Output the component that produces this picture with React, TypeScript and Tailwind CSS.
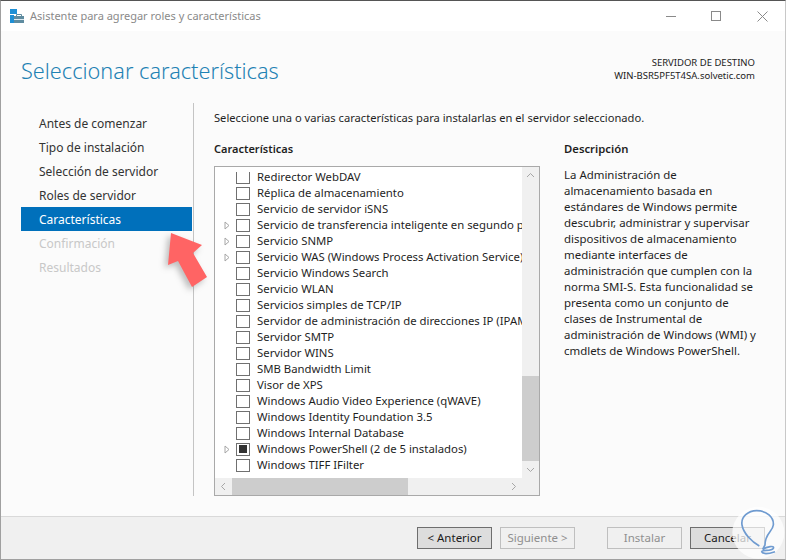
const rows = [
  { label: "Redirector WebDAV" },
  { label: "Réplica de almacenamiento" },
  { label: "Servicio de servidor iSNS" },
  { label: "Servicio de transferencia inteligente en segundo plano (BITS)", expand: true },
  { label: "Servicio SNMP", expand: true },
  { label: "Servicio WAS (Windows Process Activation Service)", expand: true },
  { label: "Servicio Windows Search" },
  { label: "Servicio WLAN" },
  { label: "Servicios simples de TCP/IP" },
  { label: "Servidor de administración de direcciones IP (IPAM)" },
  { label: "Servidor SMTP" },
  { label: "Servidor WINS" },
  { label: "SMB Bandwidth Limit" },
  { label: "Visor de XPS" },
  { label: "Windows Audio Video Experience (qWAVE)" },
  { label: "Windows Identity Foundation 3.5" },
  { label: "Windows Internal Database" },
  { label: "Windows PowerShell (2 de 5 instalados)", expand: true, partial: true },
  { label: "Windows TIFF IFilter" },
];

const steps = [
  { label: "Antes de comenzar" },
  { label: "Tipo de instalación" },
  { label: "Selección de servidor" },
  { label: "Roles de servidor" },
  { label: "Características", active: true },
  { label: "Confirmación", disabled: true },
  { label: "Resultados", disabled: true },
];

function Chevron({ d }: { d: string }) {
  return (
    <svg width="9" height="9" viewBox="0 0 9 9" fill="none" stroke="#a6a6a6" strokeWidth="1">
      <path d={d} />
    </svg>
  );
}

function WizardButton({ label, off, className }: { label: string; off?: boolean; className?: string }) {
  const look = off ? "border-[#bfbfbf] bg-[#f0f0f0] text-[#8f8f8f]" : "border-[#6e6e6e] bg-[#dddddd] text-[#1a1a1a]";
  return (
    <div className={`flex h-[22px] w-[75px] items-center justify-center border text-[11.5px] ${look} ${className ?? ""}`}>
      {label}
    </div>
  );
}

export default function App() {
  return (
    <div className="relative flex h-[560px] w-[786px] flex-col overflow-hidden border-t border-r border-b border-l border-t-[#555555] border-r-[#c8c8c8] border-b-[#a0a0a0] border-l-[#a0a0a0] bg-[#fbfbfb] font-['Noto_Sans',sans-serif] text-[12px] text-[#1f1f1f]">
      {/* title bar */}
      <div className="flex h-[30px] shrink-0 items-center bg-white pl-[9px]">
        <svg width="15" height="15" viewBox="0 0 15 15">
          <rect x="0" y="0" width="7" height="5" fill="#1e8fd5" />
          <rect x="0" y="6" width="4" height="8" fill="#1e8fd5" />
          <rect x="4" y="7" width="10" height="7" fill="#5f8ca0" />
          <rect x="4" y="10" width="10" height="1" fill="#dce8f0" />
          <path d="M6.5 7 V5.5 H11.5 V7" fill="none" stroke="#5f8ca0" />
        </svg>
        <span className="ml-[5px] text-[11px] text-[#8a8a8a]">Asistente para agregar roles y características</span>
        <div className="ml-auto flex items-center pr-[17px]">
          <div className="h-px w-[10px] bg-[#8a8a8a]" />
          <div className="ml-[35px] h-[10px] w-[10px] border border-[#8a8a8a]" />
          <svg className="ml-[36px]" width="11" height="11" viewBox="0 0 11 11" stroke="#8a8a8a" strokeWidth="1">
            <path d="M0.5 0.5 L10.5 10.5 M10.5 0.5 L0.5 10.5" />
          </svg>
        </div>
      </div>

      {/* header */}
      <div className="flex h-[72px] shrink-0 items-start justify-between pl-[20px] pr-[30px]">
        <h1 className="mt-[22px] text-[21.7px] font-light leading-[36px] text-[#1f82b4]">Seleccionar características</h1>
        <div className="mt-[25px] text-right text-[9.5px] leading-[13px] text-[#222222]">
          <div>SERVIDOR DE DESTINO</div>
          <div>WIN-BSR5PF5T4SA.solvetic.com</div>
        </div>
      </div>

      {/* body */}
      <div className="flex min-h-0 flex-1">
        <nav className="ml-[20px] flex w-[171px] shrink-0 flex-col pt-[8px]">
          {steps.map((s) => (
            <div
              key={s.label}
              className={`flex h-[24px] items-center pl-[18px] pt-[2px] ${
                s.active ? "bg-[#0070bb] text-white" : s.disabled ? "text-[#c8c8c8]" : "text-[#333333]"
              }`}
            >
              {s.label}
            </div>
          ))}
        </nav>
        <div className="mb-[20px] ml-px w-px shrink-0 bg-[#c4c4c4]" />

        <div className="ml-[20px] flex min-w-0 flex-1 flex-col">
          <p className="mt-[6px] text-[11.17px] leading-[18px]">
            Seleccione una o varias características para instalarlas en el servidor seleccionado.
          </p>
          <div className="mt-[13px] flex">
            <div className="w-[326px] shrink-0">
              <div className="text-[11px] font-semibold leading-[18px]">Características</div>
              <div className="mt-[8px] flex h-[330px] w-[326px] flex-col border border-[#a9a9a9] bg-white">
                <div className="flex min-h-0 flex-1">
                  <div className="mt-[5px] min-w-0 flex-1 overflow-hidden">
                    <div className="-mt-[3px]">
                      {rows.map((r) => (
                        <div key={r.label} className="flex h-[16px] items-center pl-[7px]">
                          <div className="flex w-[14px] shrink-0 items-center pl-[2px]">
                            {r.expand && (
                              <svg width="6" height="9" viewBox="0 0 6 9" fill="none" stroke="#a6a6a6">
                                <path d="M1 1 L5 4.5 L1 8 Z" />
                              </svg>
                            )}
                          </div>
                          <div className="flex h-[13px] w-[14px] shrink-0 items-center justify-center border border-[#707070] bg-white">
                            {r.partial && <div className="h-[8px] w-[8px] bg-[#333333]" />}
                          </div>
                          <span className="ml-[7px] whitespace-nowrap text-[11.35px] leading-[16px]">{r.label}</span>
                        </div>
                      ))}
                    </div>
                  </div>
                  {/* vertical scrollbar */}
                  <div className="flex w-[17px] shrink-0 flex-col bg-[#f0f0f0]">
                    <div className="flex h-[17px] items-center justify-center">
                      <Chevron d="M1 6 L4.5 2.5 L8 6" />
                    </div>
                    <div className="mt-[192px] h-[85px] bg-[#cdcdcd]" />
                    <div className="mt-auto flex h-[17px] items-center justify-center">
                      <Chevron d="M1 3 L4.5 6.5 L8 3" />
                    </div>
                  </div>
                </div>
                {/* horizontal scrollbar */}
                <div className="flex h-[17px] shrink-0 bg-[#f0f0f0]">
                  <div className="flex w-[17px] items-center justify-center">
                    <Chevron d="M6 1 L2.5 4.5 L6 8" />
                  </div>
                  <div className="w-[176px] bg-[#cdcdcd]" />
                  <div className="ml-auto mr-[17px] flex w-[17px] items-center justify-center">
                    <Chevron d="M3 1 L6.5 4.5 L3 8" />
                  </div>
                </div>
              </div>
            </div>
            <div className="ml-[24px] w-[205px]">
              <div className="text-[11.3px] font-semibold leading-[18px]">Descripción</div>
              <p className="mt-[8px] pt-px text-[11.45px] leading-[16px]">
                La Administración de
                <br />
                almacenamiento basada en
                <br />
                estándares de Windows permite
                <br />
                descubrir, administrar y supervisar
                <br />
                dispositivos de almacenamiento
                <br />
                mediante interfaces de
                <br />
                administración que cumplen con la
                <br />
                norma SMI-S. Esta funcionalidad se
                <br />
                presenta como un conjunto de
                <br />
                clases de Instrumental de
                <br />
                administración de Windows (WMI) y
                <br />
                cmdlets de Windows PowerShell.
              </p>
            </div>
          </div>
        </div>
      </div>

      {/* footer */}
      <div className="flex h-[43px] shrink-0 items-start border-t border-[#d9d9d9] bg-[#f0f0f0] pl-[416px] pt-[10px]">
        <WizardButton label="< Anterior" />
        <WizardButton label="Siguiente >" off className="ml-[8px]" />
        <WizardButton label="Instalar" off className="ml-[32px]" />
        <WizardButton label="Cancelar" className="ml-[8px]" />
      </div>

      {/* red arrow annotation */}
      <svg
        className="absolute left-[159px] top-[227px] drop-shadow-[-3px_3px_3px_rgba(0,0,0,0.25)]"
        width="52"
        height="64"
        viewBox="0 0 52 64"
      >
        <path d="M11 5 L42 17 L33 25 L47 49 L32 59 L18 33 L8 37 Z" fill="#ff6464" />
      </svg>

      {/* watermark logo */}
      <svg className="absolute left-[719px] top-[489px]" width="66" height="70" viewBox="0 0 198 210">
        <circle cx="115" cy="128" r="78" fill="#ffffff" fillOpacity="0.72" />
        <path
          d="M118 168 C95 155 70 130 66 105 C62 80 85 62 110 62 C140 62 162 82 160 105 C158 125 135 130 135 165 L128 178 C140 170 165 165 160 175 C155 185 125 178 125 185 C130 195 150 190 165 185"
          fill="none"
          stroke="#6f9bd0"
          strokeWidth="5"
        />
      </svg>
    </div>
  );
}
